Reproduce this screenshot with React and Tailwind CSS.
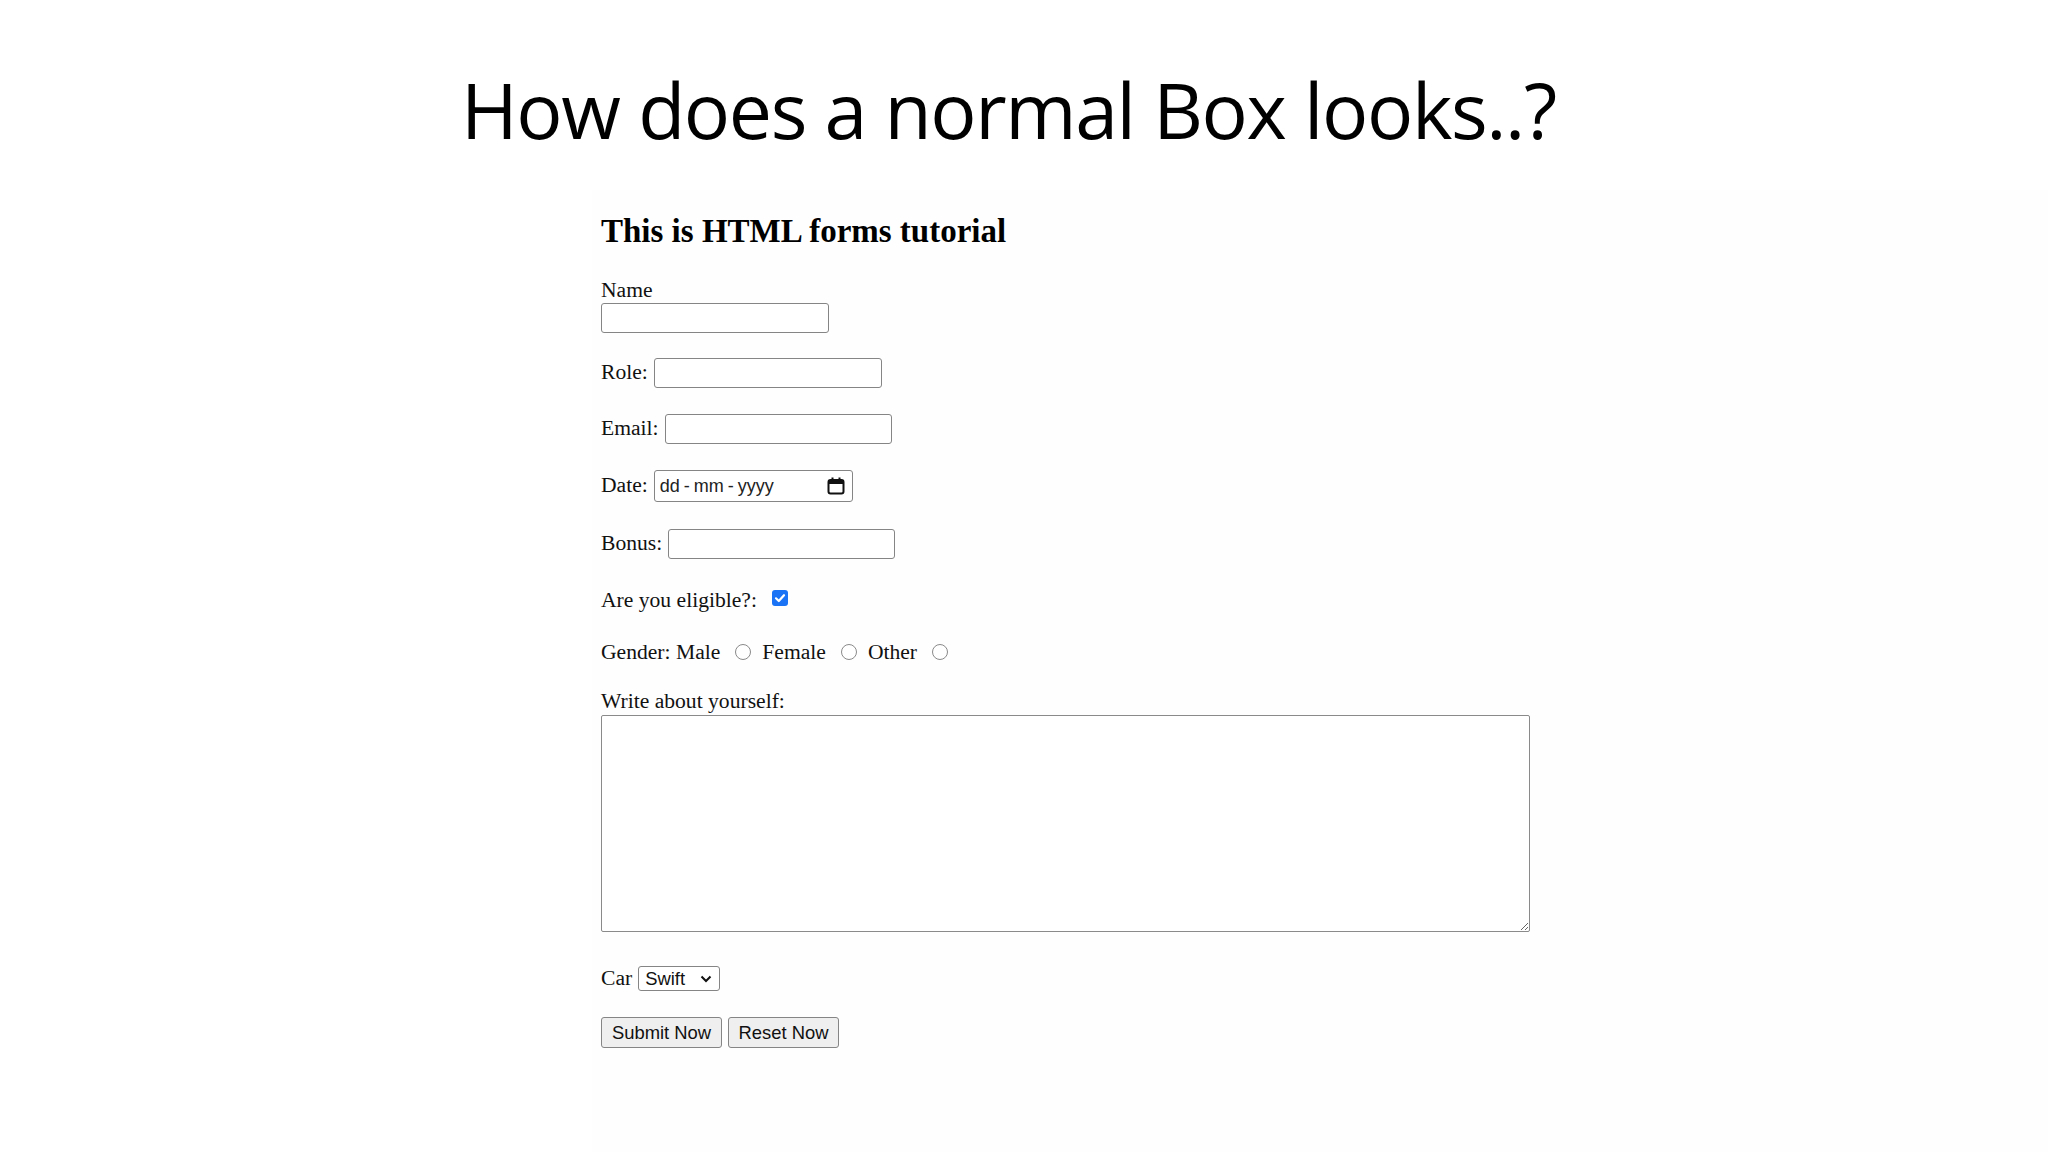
import React from "react";

const serif = "font-['Liberation_Serif','Times_New_Roman',serif]";
const sans = "font-['Liberation_Sans',Arial,sans-serif]";

function TextBox({ width }) {
  return (
    <input
      type="text"
      className={`${width} h-[30px] border-[1.5px] border-[#858585] rounded-[3px] bg-white outline-none`}
    />
  );
}

function Radio() {
  return (
    <span className="ml-[15px] mr-[11px] self-start mt-[4px] w-[16px] h-[16px] rounded-full border-[1.5px] border-[#8a8a8a] bg-white" />
  );
}

function CalendarIcon() {
  return (
    <svg width="18" height="18" viewBox="0 0 18 18" fill="none">
      <rect x="1.5" y="3" width="15" height="13.5" rx="2" stroke="#111" strokeWidth="2" />
      <rect x="1.5" y="3" width="15" height="4" fill="#111" />
      <rect x="4.5" y="0.5" width="2" height="3.5" fill="#111" />
      <rect x="11.5" y="0.5" width="2" height="3.5" fill="#111" />
    </svg>
  );
}

function App() {
  return (
    <div className="w-[2048px] h-[1152px] bg-white overflow-hidden flex flex-col">
      <div className="pt-[71px] pl-[461px]">
        <h1 className="font-['Open_Sans',sans-serif] text-[77px] leading-none tracking-[-1.4px] font-normal text-black whitespace-nowrap">
          How does a normal Box looks..?
        </h1>
      </div>

      <div className={`mt-[42px] ml-[592px] flex-1 bg-[#fefefe] pl-[9px] pt-[22px] text-[#111] ${serif} text-[21.6px]`}>
        <h2 className="text-[33px] leading-[38px] font-bold text-black">This is HTML forms tutorial</h2>

        <div className="mt-[28px] leading-[24px]">Name</div>
        <div>
          <TextBox width="w-[228px]" />
        </div>

        <div className="mt-[24px] flex items-center gap-[6px] h-[30px]">
          <span className="leading-[24px] pb-[3px]">Role:</span>
          <TextBox width="w-[228px]" />
        </div>

        <div className="mt-[26px] flex items-center gap-[6px] h-[30px]">
          <span className="leading-[24px] pb-[2px]">Email:</span>
          <TextBox width="w-[227px]" />
        </div>

        <div className="mt-[26px] flex items-center gap-[6px] h-[32px]">
          <span className="leading-[24px] pb-[2px]">Date:</span>
          <div className="w-[199px] h-[32px] border-[1.5px] border-[#858585] rounded-[3px] bg-white flex items-center pl-[5px] pr-[7px]">
            <span className={`${sans} text-[18px] text-[#222] flex gap-[4px]`}>
              <span>dd</span>
              <span>-</span>
              <span>mm</span>
              <span>-</span>
              <span>yyyy</span>
            </span>
            <span className="ml-auto flex">
              <CalendarIcon />
            </span>
          </div>
        </div>

        <div className="mt-[27px] flex items-center gap-[6px] h-[30px]">
          <span className="leading-[24px] pb-[2px]">Bonus:</span>
          <TextBox width="w-[227px]" />
        </div>

        <div className="mt-[29px] flex h-[24px] leading-[24px]">
          <span>Are you eligible?:</span>
          <span className="ml-[15px] mt-[2px] w-[16px] h-[16px] rounded-[3px] bg-[#1a73f5] flex items-center justify-center">
            <svg width="12" height="12" viewBox="0 0 12 12" fill="none">
              <path d="M2 6.3 L4.8 9 L10 3.2" stroke="white" strokeWidth="2.2" strokeLinecap="round" strokeLinejoin="round" />
            </svg>
          </span>
        </div>

        <div className="mt-[28px] flex h-[24px] leading-[24px]">
          <span>Gender: Male</span>
          <Radio />
          <span>Female</span>
          <Radio />
          <span>Other</span>
          <Radio />
        </div>

        <div className="mt-[25px] leading-[24px]">Write about yourself:</div>
        <div className="mt-[2px]">
          <textarea className="block w-[929px] h-[217px] border-[1.5px] border-[#8a8a8a] rounded-[2px] bg-white resize outline-none" />
        </div>

        <div className="mt-[34px] flex items-start gap-[6px] h-[25px]">
          <span className="leading-[24px]">Car</span>
          <div className={`${sans} w-[82px] h-[25px] border-[1.5px] border-[#858585] rounded-[3px] bg-white flex items-center pl-[6px] pr-[7px] text-[18.4px] text-[#111]`}>
            <span>Swift</span>
            <svg className="ml-auto" width="12" height="8" viewBox="0 0 12 8" fill="none">
              <path d="M1.5 1.5 L6 6 L10.5 1.5" stroke="#111" strokeWidth="2" />
            </svg>
          </div>
        </div>

        <div className={`mt-[26px] flex gap-[6px] ${sans} text-[18.4px] text-[#111]`}>
          <button className="h-[31px] w-[121px] bg-[#efefef] border-[1.5px] border-[#858585] rounded-[3px] leading-none">
            Submit Now
          </button>
          <button className="h-[31px] w-[111px] bg-[#efefef] border-[1.5px] border-[#858585] rounded-[3px] leading-none">
            Reset Now
          </button>
        </div>
      </div>
    </div>
  );
}

export default App;
